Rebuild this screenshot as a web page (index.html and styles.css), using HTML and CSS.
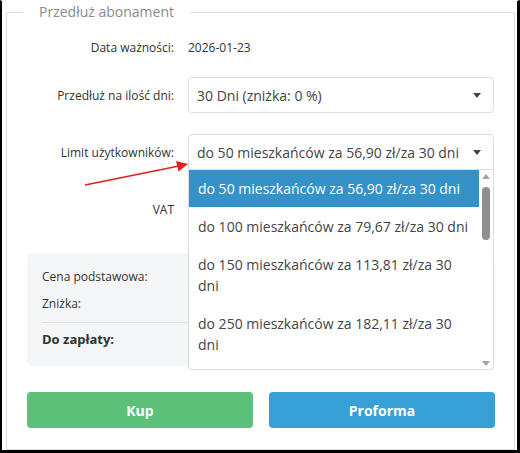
FILE: index.html
```html
<!DOCTYPE html>
<html lang="pl">
<head>
<meta charset="utf-8">
<title>Przedłuż abonament</title>
<link rel="stylesheet" href="styles.css">
</head>
<body>
<div class="frame">
  <fieldset class="panel">
    <legend class="panel-title">Przedłuż abonament</legend>
    <div class="form">
      <div class="row row-date">
        <span class="label">Data ważności:</span>
        <span class="value">2026-01-23</span>
      </div>
      <div class="row row-days">
        <span class="label">Przedłuż na ilość dni:</span>
        <div class="select">
          <span class="select-text">30 Dni (zniżka: 0 %)</span>
          <span class="caret"></span>
        </div>
      </div>
      <div class="row row-limit">
        <span class="label">Limit użytkowników:</span>
        <div class="select-wrap">
          <div class="select select-open">
            <span class="select-text">do 50 mieszkańców za 56,90 zł/za 30 dni</span>
            <span class="caret"></span>
          </div>
          <div class="dropdown">
            <ul class="options">
              <li class="option option-active">do 50 mieszkańców za 56,90 zł/za 30 dni</li>
              <li class="option">do 100 mieszkańców za 79,67 zł/za 30 dni</li>
              <li class="option">do 150 mieszkańców za 113,81 zł/za 30 dni</li>
              <li class="option">do 250 mieszkańców za 182,11 zł/za 30 dni</li>
            </ul>
            <div class="scrollbar">
              <span class="sb-up"></span>
              <span class="sb-thumb"></span>
              <span class="sb-space"></span>
              <span class="sb-down"></span>
            </div>
          </div>
        </div>
        <svg class="arrow" width="110" height="30" viewBox="0 0 110 30">
          <line x1="2" y1="25" x2="96" y2="6" stroke="#e0201d" stroke-width="1.6"/>
          <polygon points="105,4 93,1 95.5,11.5" fill="#e0201d"/>
        </svg>
      </div>
      <div class="row row-vat">
        <span class="label">VAT</span>
        <span class="value"></span>
      </div>
    </div>
    <div class="summary">
      <div class="sum-row">Cena podstawowa:</div>
      <div class="sum-row">Zniżka:</div>
      <div class="sum-sep"></div>
      <div class="sum-row sum-total">Do zapłaty:</div>
    </div>
    <div class="actions">
      <div class="btn btn-buy">Kup</div>
      <div class="btn btn-proforma">Proforma</div>
    </div>
  </fieldset>
</div>
</body>
</html>
```

FILE: styles.css
```css
* { box-sizing: border-box; }
html, body { margin: 0; padding: 0; background: #fff; }
body {
  font-family: "Open Sans", "Noto Sans", sans-serif;
  color: #333;
  font-size: 12px;
}
.frame {
  width: 520px;
  height: 453px;
  border-left: 2px solid #000;
  border-right: 3px solid #000;
  border-bottom: 3px solid #000;
  border-top: 1px solid #fff;
  padding: 1px 2px 1px 4px;
}
.panel {
  margin: 0;
  height: 448px;
  border: 1px solid #dcdfe0;
  padding: 0 19px 0 20px;
  min-width: 0;
}
.panel-title {
  margin-left: -4px;
  padding: 0 16px;
  font-size: 14px;
  line-height: 20px;
  color: #8a8a8a;
}
.form {
  padding-top: 7px;
}
.row {
  display: grid;
  grid-template-columns: 147px 306px;
  column-gap: 14px;
  align-items: center;
  position: relative;
}
.label {
  text-align: right;
  font-size: 12px;
  color: #333;
}
.value { font-size: 12px; color: #333; }
.row-date { height: 36px; }
.row-days { height: 36px; margin-top: 12px; }
.row-limit { height: 36px; margin-top: 21px; }
.row-vat { height: 36px; margin-top: 21px; }
.select {
  height: 36px;
  border: 1px solid #dcdfe1;
  border-radius: 4px;
  display: flex;
  align-items: center;
  padding: 0 12px 0 8px;
  background: #fff;
}
.select-text {
  flex: 1;
  font-size: 14px;
  color: #444;
  white-space: nowrap;
}
.caret {
  width: 0;
  height: 0;
  border-left: 4px solid transparent;
  border-right: 4px solid transparent;
  border-top: 5px solid #444;
}
.select-wrap { position: relative; }
.select-open { border-radius: 4px 4px 0 0; }
.dropdown {
  position: absolute;
  left: 0;
  top: 36px;
  width: 306px;
  height: 200px;
  border: 1px solid #dcdfe1;
  border-top: none;
  border-radius: 0 0 4px 4px;
  background: #fff;
  display: flex;
  overflow: hidden;
  z-index: 5;
}
.options {
  list-style: none;
  margin: 0;
  padding: 0;
  flex: 1;
  overflow: hidden;
}
.option {
  padding: 8px 9px;
  font-size: 14px;
  line-height: 21px;
  color: #444;
}
.option + .option { margin-top: 1px; }
.option-active {
  background: #3592c8;
  color: #fff;
}
.scrollbar {
  width: 14px;
  display: flex;
  flex-direction: column;
  align-items: center;
  padding: 4px 0 3px;
}
.sb-up, .sb-down {
  width: 0;
  height: 0;
  border-left: 4px solid transparent;
  border-right: 4px solid transparent;
}
.sb-up { border-bottom: 5px solid #a3a3a3; }
.sb-down { border-top: 5px solid #a3a3a3; }
.sb-thumb {
  width: 8px;
  height: 53px;
  margin-top: 8px;
  border-radius: 4px;
  background: #8f8f8f;
}
.sb-space { flex: 1; }
.arrow {
  position: absolute;
  left: 56px;
  top: 26px;
}
.summary {
  margin-top: 26px;
  background: #f5f6f7;
  border-radius: 6px;
  height: 113px;
  padding: 14px 15px 0;
}
.sum-row {
  font-size: 12px;
  line-height: 20px;
  color: #333;
}
.sum-row + .sum-row { margin-top: 7px; }
.sum-sep {
  border-top: 1px solid #dfe1e3;
  margin: 8px 0 6px;
}
.sum-total { font-weight: 700; font-size: 13px; }
.actions {
  margin-top: 26px;
  display: flex;
  gap: 16px;
}
.btn {
  flex: 1;
  height: 36px;
  border-radius: 4px;
  color: #fff;
  font-size: 14px;
  font-weight: 700;
  display: flex;
  align-items: center;
  justify-content: center;
}
.btn-buy { background: #5dc078; }
.btn-proforma { background: #37a0d7; }
```
